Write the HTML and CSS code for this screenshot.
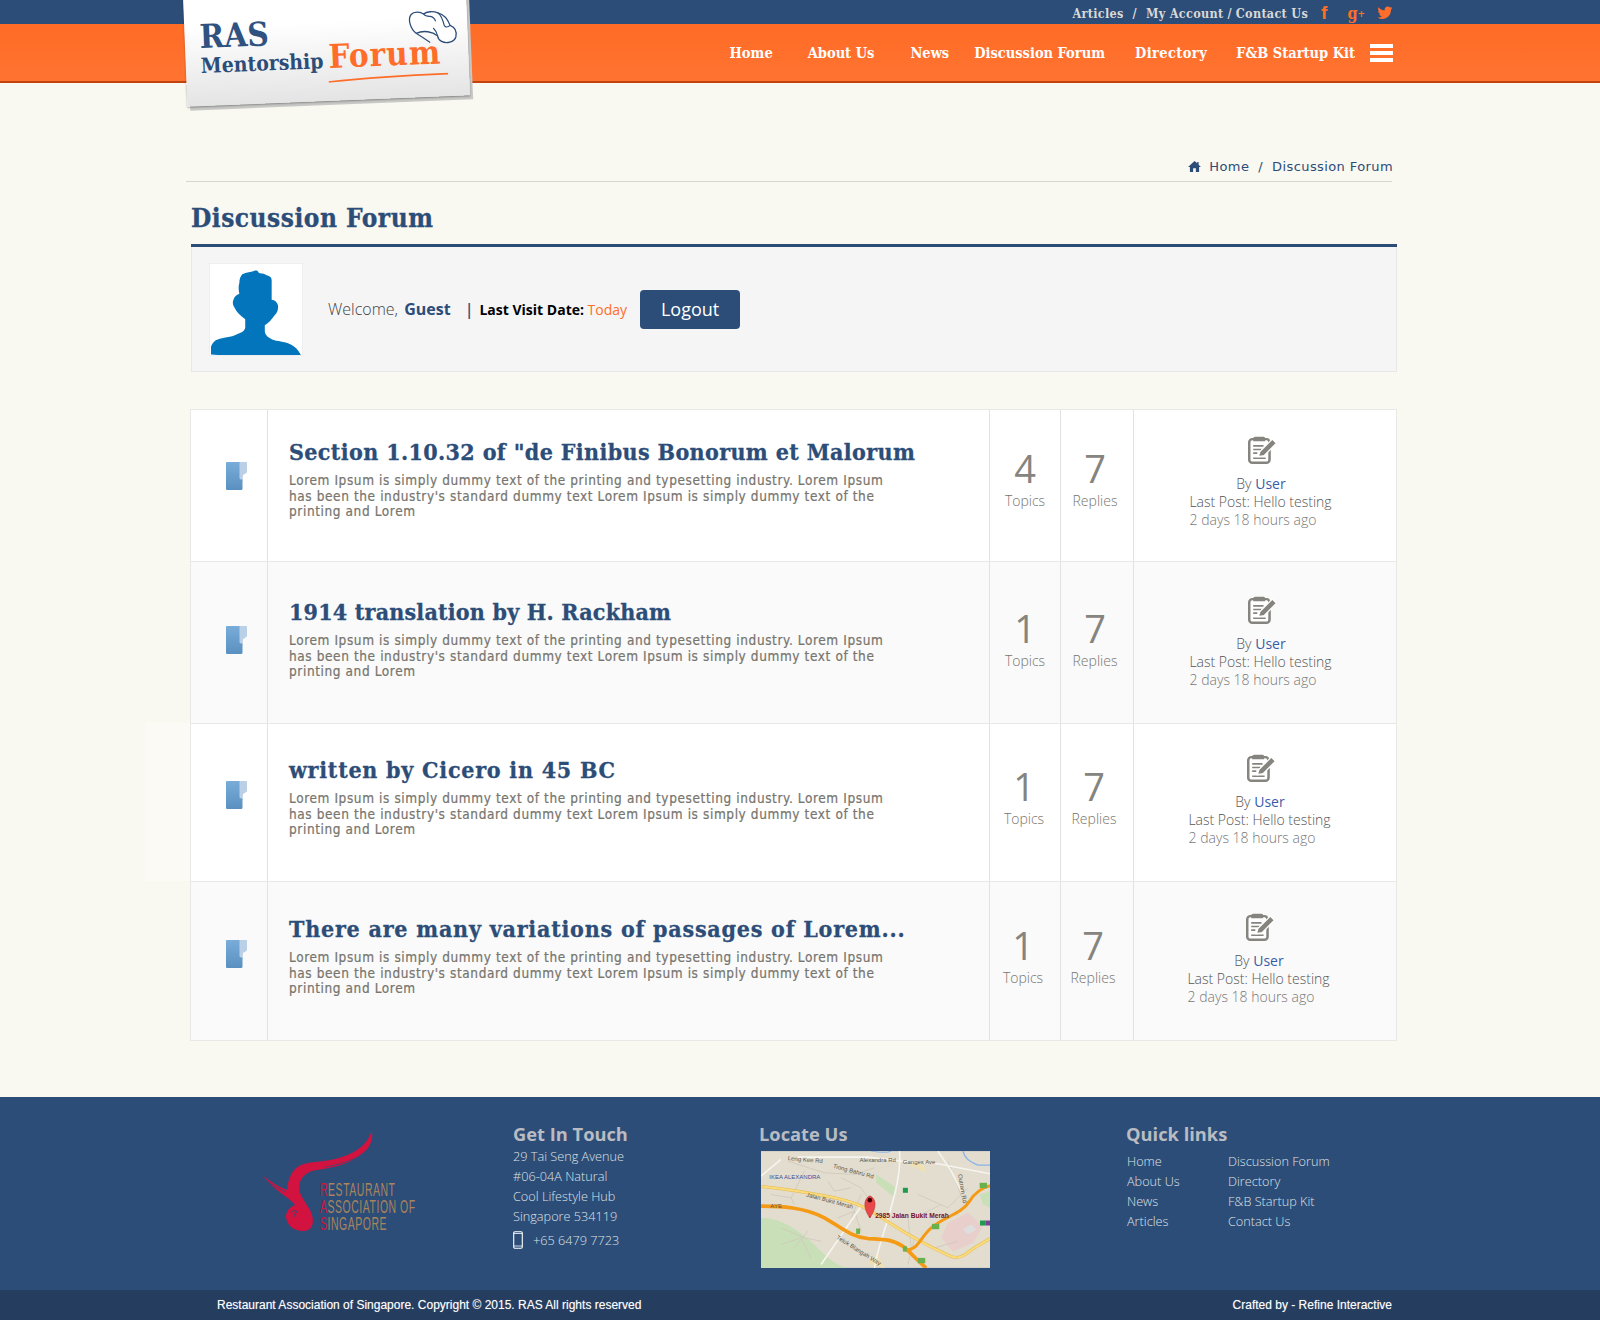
FILE: index.html
```html
<!DOCTYPE html>
<html lang="en">
<head>
    <meta charset="UTF-8">
    <meta name="viewport" content="width=device-width, initial-scale=1.0">
    <title>Discussion Forum</title>
    <link rel="stylesheet" href="styles.css">
</head>
<body>
    <header class="site-header">
        <div class="top-bar">
            <a href="#">Articles</a><span class="sep">/</span><a href="#">My Account</a><span class="sep-tight">/</span><a href="#">Contact Us</a>
            <span class="social social-f">f</span>
            <span class="social social-g">g<small>+</small></span>
            <svg class="social-tw" viewBox="0 0 24 24"><path d="M23 4.500c-.8.4-1.700.6-2.600.7.900-.6 1.700-1.500 2-2.500-.9.5-1.900.9-2.900 1.100a4.600 4.600 0 0 0-7.900 4.200C7.800 7.800 4.400 6 2.200 3.200 1 5.300 1.600 8 3.600 9.400c-.7 0-1.400-.2-2-.6 0 2.200 1.600 4.100 3.700 4.600-.7.200-1.400.2-2.100.1.600 1.900 2.300 3.200 4.300 3.200A9.300 9.300 0 0 1 .8 18.600 13 13 0 0 0 20.900 7c.9-.6 1.600-1.500 2.100-2.500z"/></svg>
        </div>
        <nav class="main-nav">
            <a class="nav-home" href="#">Home</a>
            <a class="nav-about" href="#">About Us</a>
            <a class="nav-news" href="#">News</a>
            <a class="nav-forum" href="#">Discussion Forum</a>
            <a class="nav-dir" href="#">Directory</a>
            <a class="nav-kit" href="#">F&amp;B Startup Kit</a>
            <span class="burger"><i></i><i></i><i></i></span>
        </nav>
        <div class="logo-back"></div>
        <div class="logo">
            <span class="logo-ras">RAS</span>
            <span class="logo-mentor">Mentorship</span>
            <span class="logo-forum">Forum</span>
            <svg class="logo-line" viewBox="0 0 120 6"><path d="M0 5C30 3 80 1.500 120 1.500" fill="none" stroke="#ff6d2a" stroke-width="1.600"/></svg>
            <svg class="logo-hat" viewBox="712 30 150 110"><path d="M735 100C718 85 710 55 722 42c8-9 28-8 38 0 10-8 30-8 44-2 20 6 30 22 36 40 14 6 20 20 16 36-6 16-30 20-44 12-8-4-11-10-12-18-15-12-40-20-65-10z" fill="#fff" stroke="#2c4d78" stroke-width="4"/><path d="M735 100c12 8 26 18 42 30M800 110c-2-10-6-18-12-24M760 42c4 6 12 8 20 8 10 2 14 8 16 16M804 40c10 8 14 20 18 40 4 6 10 6 18 0" fill="none" stroke="#2c4d78" stroke-width="3.500"/></svg>
        </div>
    </header>

    <div class="glow-patch"></div>

    <main class="wrap">
        <div class="breadcrumb">
            <svg class="home-icon" viewBox="0 0 14 12"><path d="M7 0L0 6.500h2V12h3.500V8h3v4H12V6.500h2L11.500 4V1H10v1.500z"/></svg>
            <a href="#">Home</a><span class="crumb-sep">/</span><a href="#">Discussion Forum</a>
        </div>

        <div class="content">
            <h1 class="page-title">Discussion Forum</h1>

            <section class="welcome">
                <div class="avatar">
                    <svg viewBox="0 0 94 92"><path d="M1 92V84C3 79 6 77 10 76c6-2 12-2 16-4 6-2 10-4 10-8v-8C31 52 27 49 25 44c-2-3-2-6-1-8 1-3 3-5 6-6-1-4-1-8 0-11 0-4 1-7 3-9 4-2 9-2 14-4 3 1 2 3 4 3 3 0 5 1 7 2 4 1 5 3 5 5l0 20c3 0 6 3 6.500 6 .5 4-1 8-3.500 10-3 4-6 8-10 10v6c0 4 4 8 11.700 10 7 1 11 2 15.300 4 4 2 7 5 9.600 10v6z" fill="#0275bd"/></svg>
                </div>
                <p class="welcome-text">Welcome, <b class="guest">Guest</b></p>
                <span class="welcome-sep">|</span>
                <p class="visit"><b>Last Visit Date:</b> <span class="today">Today</span></p>
                <button class="logout" type="button">Logout</button>
            </section>

            <section class="forum-list">
                <article class="forum-row row-a">
                    <div class="cell-folder"><svg class="folder" viewBox="0 0 21 28"><use href="#folder-shape"/></svg></div>
                    <div class="cell-main">
                        <h2>Section 1.10.32 of "de Finibus Bonorum et Malorum</h2>
                        <p>Lorem Ipsum is simply dummy text of the printing and typesetting industry. Lorem Ipsum has been the industry's standard dummy text Lorem Ipsum is simply dummy text of the printing and Lorem</p>
                    </div>
                    <div class="cell-count"><strong>4</strong><span>Topics</span></div>
                    <div class="cell-count count-replies"><strong>7</strong><span>Replies</span></div>
                    <div class="cell-last">
                        <svg class="note" viewBox="0 0 28 27"><use href="#note-shape"/></svg>
                        <div>By <a href="#">User</a></div>
                        <div class="last-line">Last Post: Hello testing</div>
                        <div class="ago">2 days 18 hours ago</div>
                    </div>
                </article>

                <article class="forum-row row-alt row-b">
                    <div class="cell-folder"><svg class="folder" viewBox="0 0 21 28"><use href="#folder-shape"/></svg></div>
                    <div class="cell-main">
                        <h2>1914 translation by H. Rackham</h2>
                        <p>Lorem Ipsum is simply dummy text of the printing and typesetting industry. Lorem Ipsum has been the industry's standard dummy text Lorem Ipsum is simply dummy text of the printing and Lorem</p>
                    </div>
                    <div class="cell-count"><strong>1</strong><span>Topics</span></div>
                    <div class="cell-count count-replies"><strong>7</strong><span>Replies</span></div>
                    <div class="cell-last">
                        <svg class="note" viewBox="0 0 28 27"><use href="#note-shape"/></svg>
                        <div>By <a href="#">User</a></div>
                        <div class="last-line">Last Post: Hello testing</div>
                        <div class="ago">2 days 18 hours ago</div>
                    </div>
                </article>

                <article class="forum-row row-c">
                    <div class="cell-folder"><svg class="folder" viewBox="0 0 21 28"><use href="#folder-shape"/></svg></div>
                    <div class="cell-main">
                        <h2>written by Cicero in 45 BC</h2>
                        <p>Lorem Ipsum is simply dummy text of the printing and typesetting industry. Lorem Ipsum has been the industry's standard dummy text Lorem Ipsum is simply dummy text of the printing and Lorem</p>
                    </div>
                    <div class="cell-count"><strong>1</strong><span>Topics</span></div>
                    <div class="cell-count count-replies"><strong>7</strong><span>Replies</span></div>
                    <div class="cell-last">
                        <svg class="note" viewBox="0 0 28 27"><use href="#note-shape"/></svg>
                        <div>By <a href="#">User</a></div>
                        <div class="last-line">Last Post: Hello testing</div>
                        <div class="ago">2 days 18 hours ago</div>
                    </div>
                </article>

                <article class="forum-row row-alt row-d">
                    <div class="cell-folder"><svg class="folder" viewBox="0 0 21 28"><use href="#folder-shape"/></svg></div>
                    <div class="cell-main">
                        <h2>There are many variations of passages of Lorem...</h2>
                        <p>Lorem Ipsum is simply dummy text of the printing and typesetting industry. Lorem Ipsum has been the industry's standard dummy text Lorem Ipsum is simply dummy text of the printing and Lorem</p>
                    </div>
                    <div class="cell-count"><strong>1</strong><span>Topics</span></div>
                    <div class="cell-count count-replies"><strong>7</strong><span>Replies</span></div>
                    <div class="cell-last">
                        <svg class="note" viewBox="0 0 28 27"><use href="#note-shape"/></svg>
                        <div>By <a href="#">User</a></div>
                        <div class="last-line">Last Post: Hello testing</div>
                        <div class="ago">2 days 18 hours ago</div>
                    </div>
                </article>
            </section>
        </div>
    </main>

    <footer class="site-footer">
        <div class="footer-main">
            <div class="footer-logo">
                <svg viewBox="0 0 160 110">
                    <path d="M108.700 3.700C111 12 106 22 100 26 90 35 76 40 54 43 44 44 37 50 36 60 36 70 46 78 49 88 51 95 50 103 42 104 32 105 24 99 23 90 23 84 27 80 32 78 26 70 12 64 0 49 8 55 16 60 24 63 25 52 29 42 38 38 48 34 60 35 72 32 88 28 104 20 108.700 3.700z" fill="#d2123f"/>
                    <path d="M28 86c2-3 5-3 6-1-2 1-3 3-3 5" fill="none" stroke="#2c4d78" stroke-width="1"/>
                    <path d="M3 53c6 5 13 9 20 12M103 24C94 32 80 37 62 40" fill="none" stroke="#2c4d78" stroke-width=".7"/>
                    <text class="ras-text" transform="translate(57 68.500) scale(.55 1)"><tspan class="ras-red">R</tspan>ESTAURANT</text>
                    <text class="ras-text" transform="translate(57 85.500) scale(.55 1)"><tspan class="ras-red">A</tspan>SSOCIATION OF</text>
                    <text class="ras-text" transform="translate(57 102.500) scale(.55 1)"><tspan class="ras-red">S</tspan>INGAPORE</text>
                </svg>
            </div>

            <div class="footer-contact">
                <h3>Get In Touch</h3>
                <p>29 Tai Seng Avenue</p>
                <p>#06-04A Natural</p>
                <p>Cool Lifestyle Hub</p>
                <p>Singapore 534119</p>
                <p class="phone">
                    <svg viewBox="0 0 10 18"><rect x=".7" y=".7" width="8.600" height="16.600" rx="1.200" fill="none" stroke="#fff" stroke-width="1.100"/><path d="M1 2.500h8M1 15h8" stroke="#fff" stroke-width=".8"/></svg>
                    +65 6479 7723
                </p>
            </div>

            <div class="footer-map">
                <h3>Locate Us</h3>
                <svg class="map" viewBox="0 0 686 350">
                    <rect width="686" height="350" fill="#e3ddd0"/>
                    <path d="M0 200C60 200 120 240 170 290 200 320 220 340 260 350H0z" fill="#c8dfb8"/>
                    <path d="M345 70l60 40-10 25-50-40zM655 130l31-10v50l-20-10z" fill="#c8dfb8"/>
                    <path d="M560 215l60-30 45 40-30 50-60 25-35-40z" fill="#e8cfcb"/>
                    <path d="M605 235l25-15 15 15-25 15z" fill="#dedede"/>
                    <path d="M440 40l45-10 10 35z" fill="#ece0b4"/>
                    <path d="M320 340l30-35 20 45z" fill="#ece0b4"/>
                    <g fill="none" stroke="#cfc9ba" stroke-width="2.500">
                        <path d="M80 30l110 35 90 5 60-20M130 60l-40 80M240 80l60 30 40 60M60 230l70 30 50 10M470 130l90 40 60-60M300 130l-30 70M560 30l50 130M520 290l70-20M100 290l40-50M440 200l10 90M230 200l50-20 20 60M460 260l-20 80M60 280l60-20 30 60M30 130l60 10 10 20M200 90l20 30 50-10M480 190l60-30"/>
                    </g>
                    <g fill="none" stroke="#f6f4ef">
                        <path d="M0 75L60 25M110 18l210 0 100 12 110 8 156 30M415 0c5 60-10 120-40 220-15 50-30 90-35 130M300 165L180 340M530 0l40 60 30 60" stroke-width="5"/>
                    </g>
                    <path d="M605 0c5 20 15 30 45 42h36" fill="none" stroke="#8ab4e8" stroke-width="4"/>
                    <path d="M330 0c30 5 50 5 60 0" fill="none" stroke="#8ab4e8" stroke-width="3"/>
                    <path d="M0 106C60 112 130 122 220 140 290 155 320 172 380 212 430 245 500 285 570 316 590 322 605 318 625 300 640 288 665 275 686 262" fill="none" stroke="#e6b84c" stroke-width="9"/>
                    <path d="M0 106C60 112 130 122 220 140 290 155 320 172 380 212 430 245 500 285 570 316 590 322 605 318 625 300 640 288 665 275 686 262" fill="none" stroke="#fbdc7a" stroke-width="6"/>
                    <path d="M0 165C60 165 130 168 190 200 240 228 270 258 320 262 370 264 395 265 425 285 445 300 470 330 495 350" fill="none" stroke="#f59a14" stroke-width="11"/>
                    <path d="M430 296C470 300 475 260 510 230 550 195 600 190 625 150 640 125 665 108 686 104" fill="none" stroke="#f59a14" stroke-width="9"/>
                    <g fill="#6ab04c"><rect x="425" y="110" width="15" height="15" fill="#1f9a4e"/><rect x="655" y="95" width="22" height="16"/><rect x="285" y="232" width="12" height="16"/><rect x="512" y="218" width="22" height="16"/><rect x="425" y="285" width="12" height="16"/><rect x="470" y="320" width="22" height="16"/></g>
                    <rect x="656" y="208" width="16" height="15" fill="#1f9a4e"/><rect x="672" y="208" width="14" height="15" fill="#7b3f98"/>
                    <path d="M326 200c-22-30-18-58 0-66 20 8 22 36 0 66z" fill="#e8484a" stroke="#b32a2a" stroke-width="1.500"/>
                    <circle cx="326" cy="147" r="7" fill="#400"/>
                    <circle cx="326" cy="197" r="3" fill="#d22"/>
                    <text class="map-pin" x="342" y="201">2985 Jalan Bukit Merah</text>
                    <text class="map-label" x="295" y="32">Alexandra Rd</text>
                    <text class="map-label" x="425" y="38">Ganges Ave</text>
                    <text class="map-label" x="80" y="27" transform="rotate(5 80 27)">Leng Kee Rd</text>
                    <text class="map-label" x="215" y="50" transform="rotate(15 215 50)">Tiong Bahru Rd</text>
                    <text class="map-label map-ikea" x="25" y="84">IKEA ALEXANDRA</text>
                    <text class="map-label" x="135" y="136" transform="rotate(15 135 136)">Jalan Bukit Merah</text>
                    <text class="map-label" x="28" y="172">AYE</text>
                    <text class="map-label" x="590" y="70" transform="rotate(80 590 70)">Outram Rd</text>
                    <text class="map-label" x="225" y="262" transform="rotate(32 225 262)">Telok Blangah Way</text>
                </svg>
            </div>

            <div class="footer-links">
                <h3>Quick links</h3>
                <ul>
                    <li><a href="#">Home</a></li>
                    <li><a href="#">Discussion Forum</a></li>
                    <li><a href="#">About Us</a></li>
                    <li><a href="#">Directory</a></li>
                    <li><a href="#">News</a></li>
                    <li><a href="#">F&amp;B Startup Kit</a></li>
                    <li><a href="#">Articles</a></li>
                    <li><a href="#">Contact Us</a></li>
                </ul>
            </div>
        </div>
        <div class="footer-bottom">
            <span>Restaurant Association of Singapore. Copyright © 2015. RAS All rights reserved</span>
            <span>Crafted by - Refine Interactive</span>
        </div>
    </footer>

    <!-- shared icons -->
    <svg class="icon-defs" width="0" height="0">
        <defs>
            <linearGradient id="folder-grad" x1="0" y1="0" x2="0" y2="1">
                <stop offset="0" stop-color="#79acd9"/>
                <stop offset="1" stop-color="#5a90c0"/>
            </linearGradient>
            <g id="folder-shape">
                <path d="M13 0h7c.6 0 1 .5 1 1v9c0 .5-.5 1-1.500 1.500L17 13l-.5 6H13z" fill="#b9d0e6"/>
                <path d="M1 0h12.500v16c0 1 1 1.500 3 1.500V26.500c0 1-.8 1.500-1.500 1.500H1c-.6 0-1-.6-1-1.500V1c0-.5.5-1 1-1z" fill="url(#folder-grad)"/>
            </g>
            <g id="note-shape">
                <rect x="1.200" y="3" width="19.600" height="22.800" rx="3" fill="#fff" stroke="#85847e" stroke-width="2.400"/>
                <path d="M5 5V2.500C5 1.500 6 .8 7 .8h8c1 0 1.500.7 1.500 1.700V5z" fill="#85847e"/>
                <path d="M5 9.500h10M5 13h8M5 16.500h4M5 21.500h12" stroke="#85847e" stroke-width="1.600"/>
                <path d="M10 20l1.500-5L23.500 3l4 4L15.500 19z" fill="#85847e" stroke="#fff" stroke-width="1.200"/>
            </g>
        </defs>
    </svg>
</body>
</html>
```

FILE: styles.css
```css
/* General */
body {
    margin: 0;
    background: #f9f8f1;
    font-family: "Open Sans", Arial, sans-serif;
    color: #77756e;
    overflow-x: hidden;
}
a {
    text-decoration: none;
    color: inherit;
}
h1, h2, h3, p {
    margin: 0;
}
.icon-defs {
    position: absolute;
}

/* Header */
.site-header {
    position: relative;
    font-family: "DejaVu Serif", serif;
    font-stretch: condensed;
    font-weight: 700;
}
.top-bar {
    height: 24px;
    box-sizing: border-box;
    padding: 2px 207px 0 0;
    background: #2c4d78;
    color: #d9d9d6;
    font-size: 12.5px;
    letter-spacing: 0.3px;
    display: flex;
    justify-content: flex-end;
    align-items: center;
}
.sep {
    margin: 0 9px;
}
.sep-tight {
    margin: 0 4px;
}
.social {
    color: #ff6d2a;
    letter-spacing: 0;
}
.social-f {
    margin-left: 13px;
    font-family: "Liberation Sans", sans-serif;
    font-size: 19px;
}
.social-g {
    margin-left: 20px;
    font-size: 16px;
    font-weight: 700;
}
.social-g small {
    font-size: 10px;
    vertical-align: 2px;
}
.social-tw {
    width: 16px;
    height: 16px;
    fill: #ff6d2a;
    margin-left: 12px;
}
.main-nav {
    height: 59px;
    box-sizing: border-box;
    background: linear-gradient(#ff6c26, #ff7331);
    border-bottom: 2px solid #c1440e;
    color: #fff;
    font-size: 14.5px;
    display: flex;
    justify-content: flex-end;
    align-items: center;
    padding-right: 207px;
}
.nav-about {
    margin-left: 35px;
}
.nav-news {
    margin-left: 36px;
}
.nav-forum {
    margin-left: 25px;
}
.nav-dir {
    margin-left: 30px;
    letter-spacing: 0.4px;
}
.nav-kit {
    margin-left: 29px;
}
.burger {
    margin-left: 15px;
    width: 23px;
    display: flex;
    flex-direction: column;
    gap: 3px;
}
.burger i {
    height: 4px;
    background: #fff;
}

/* Logo sits over both header bars */
.logo,
.logo-back {
    position: absolute;
    left: 185px;
    top: -12px;
    width: 283px;
    height: 113px;
    transform: rotate(-2.3deg);
}
.logo-back {
    background: #c9c9c7;
    left: 188px;
    top: -8px;
}
.logo {
    background: linear-gradient(#fff 30%, #e4e4e4);
    box-shadow: 0 1px 2px rgba(0, 0, 0, 0.35);
}
.logo-ras,
.logo-mentor,
.logo-forum {
    position: absolute;
    white-space: nowrap;
}
.logo-ras {
    left: 15px;
    top: 24px;
    font-size: 33px;
    color: #2f5280;
}
.logo-mentor {
    left: 15px;
    top: 60px;
    font-size: 21px;
    color: #2c4d78;
}
.logo-forum {
    left: 143px;
    top: 49px;
    font-size: 33px;
    color: #ff6d2a;
    letter-spacing: 1px;
}
.logo-line {
    position: absolute;
    left: 142px;
    top: 89px;
    width: 120px;
    height: 6px;
}
.logo-hat {
    position: absolute;
    left: 224px;
    top: 26px;
    width: 49px;
    height: 36px;
}

/* Faint lighter area left of row three */
.glow-patch {
    position: absolute;
    left: 145px;
    top: 723px;
    width: 46px;
    height: 158px;
    background: #fbfaf5;
}

/* Breadcrumb */
.wrap {
    position: relative;
    width: 1206px;
    margin-left: 186px;
}
.breadcrumb {
    height: 99px;
    box-sizing: border-box;
    padding-top: 69px;
    border-bottom: 1px solid #d5d4ce;
    display: flex;
    justify-content: flex-end;
    align-items: center;
    font-family: "DejaVu Sans", sans-serif;
    font-size: 13px;
    letter-spacing: 0.4px;
    color: #2c4d78;
}
.breadcrumb a:last-child {
    margin-right: -1px;
}
.home-icon {
    width: 13px;
    height: 11px;
    fill: #2c4d78;
    margin-right: 8px;
}
.crumb-sep {
    margin: 0 9px;
}

/* Page title */
.content {
    padding-left: 5px;
    width: 1206px;
}
.page-title {
    margin-top: 18px;
    padding: 0 0 8px 0;
    font-family: "DejaVu Serif", serif;
    font-stretch: condensed;
    font-size: 26px;
    letter-spacing: 0.5px;
    line-height: 36px;
    color: #2c4d78;
    border-bottom: 3px solid #2c4d78;
    -webkit-text-stroke: 0.3px #2c4d78;
}

/* Welcome box */
.welcome {
    height: 125px;
    box-sizing: border-box;
    background: #f5f5f6;
    border: 1px solid #e8e8e6;
    border-top: 0;
    display: flex;
    align-items: center;
    padding-left: 17px;
}
.avatar {
    width: 94px;
    height: 93px;
    background: #fff;
    border: 1px solid #eee;
    box-sizing: border-box;
    margin-right: 25px;
}
.avatar svg {
    display: block;
    width: 100%;
    height: 100%;
}
.welcome-text {
    font-size: 16px;
    font-weight: 300;
    color: #444;
}
.guest {
    font-weight: 700;
    color: #2c4d78;
    margin-left: 2px;
}
.welcome-sep {
    margin: 0 6px 0 14px;
    color: #2c4d78;
    font-size: 16px;
    font-weight: 600;
}
.visit {
    font-size: 14px;
    color: #000;
}
.visit b {
    font-weight: 700;
}
.today {
    color: #ff6d2a;
    font-weight: 400;
}
.logout {
    margin-left: 13px;
    width: 100px;
    height: 39px;
    background: #2c4d78;
    color: #fff;
    border: 0;
    border-radius: 4px;
    font-family: "Open Sans", Arial, sans-serif;
    font-size: 18px;
}

/* Forum rows */
.forum-list {
    margin: 37px 0 0 -1px;
    border: 1px solid #e8e8e6;
    background: #fff;
}
.forum-row {
    display: grid;
    grid-template-columns: 76px 722px 71px 73px 1fr;
    box-sizing: border-box;
    border-bottom: 1px solid #e8e8e6;
}
.forum-row:last-child {
    border-bottom: 0;
}
.row-alt {
    background: #fafafa;
}
.row-a { height: 152px; --pad: 24px; --track: 0.37px; --nudge: 0px; --fold: 28px; }
.row-b { height: 162px; --pad: 32px; --track: 0.2px; --nudge: 0px; --fold: 32px; }
.row-c { height: 158px; --pad: 28px; --track: 0.75px; --nudge: 2px; --fold: 29px; }
.row-d { height: 158px; --pad: 29px; --track: 0.77px; --nudge: 4px; --fold: 29px; }
.forum-row > div {
    border-left: 1px solid #e2e2e0;
    padding-top: var(--pad);
}
.forum-row > div:first-child {
    border-left: 0;
}
.cell-folder {
    display: flex;
    justify-content: center;
    padding-left: 15px;
}
.folder {
    width: 21px;
    height: 28px;
    margin-top: var(--fold);
}
.cell-main {
    padding-left: 21px;
}
.cell-main h2 {
    margin-top: 1px;
    font-family: "DejaVu Serif", serif;
    font-stretch: condensed;
    font-size: 23px;
    letter-spacing: var(--track);
    line-height: 34px;
    color: #2c4d78;
    white-space: nowrap;
    -webkit-text-stroke: 0.3px #2c4d78;
}
.cell-main p {
    margin-top: 4px;
    width: 610px;
    font-family: "DejaVu Sans", sans-serif;
    font-stretch: condensed;
    font-size: 13.5px;
    letter-spacing: 0.6px;
    line-height: 15.5px;
    color: #77756e;
    -webkit-text-stroke: 0.2px #77756e;
}
.cell-count {
    text-align: center;
    padding-right: var(--nudge);
}
.count-replies {
    padding-right: calc(var(--nudge) + 4px);
}
.cell-count strong {
    display: block;
    font-weight: 500;
    font-size: 38px;
    line-height: 44px;
    margin-top: 12px;
    color: #85847e;
}
.cell-count span {
    display: block;
    margin-top: 1px;
    font-size: 14px;
    line-height: 20px;
    font-weight: 300;
    color: #77756e;
}
.cell-last {
    text-align: center;
    font-size: 14px;
    font-weight: 300;
    line-height: 18px;
    color: #555;
    padding-right: calc(var(--nudge) + 8px);
}
.cell-last a {
    color: #3a5ca8;
    font-weight: 400;
}
.note {
    display: block;
    width: 29px;
    height: 28px;
    margin: 2px auto 11px;
    transform: translateX(1px);
}
.last-line {
    margin-left: -1px;
}
.ago {
    color: #777;
    margin-right: 16px;
}

/* Footer */
.site-footer {
    margin-top: 56px;
    background: #2c4d78;
    color: #dfe1e5;
}
.footer-main {
    height: 193px;
    display: flex;
    box-sizing: border-box;
    padding-top: 25px;
}
.site-footer h3 {
    font-size: 18.3px;
    line-height: 24px;
    font-weight: 700;
    color: #b9bcc2;
}
.footer-logo {
    width: 513px;
    box-sizing: border-box;
    padding: 5px 0 0 263px;
}
.footer-logo svg {
    display: block;
    width: 160px;
    height: 110px;
}
.ras-text {
    font-family: "Liberation Sans", sans-serif;
    font-size: 19px;
    letter-spacing: 1px;
    fill: #a9845c;
}
.ras-red {
    fill: #d2123f;
}
.footer-contact {
    width: 246px;
    font-size: 12.7px;
    font-weight: 300;
    line-height: 20px;
}
.phone {
    display: flex;
    align-items: center;
    gap: 10px;
    margin-top: 4px;
}
.phone svg {
    width: 10px;
    height: 18px;
}
.footer-map {
    width: 367px;
}
.map {
    display: block;
    width: 229px;
    height: 117px;
    margin: 5px 0 0 2px;
}
.map-pin {
    font-family: "Liberation Sans", sans-serif;
    font-size: 20px;
    font-weight: 700;
    fill: #7a0f22;
}
.map-label {
    font-family: "Liberation Sans", sans-serif;
    font-size: 18px;
    fill: #5c5848;
}
.map-ikea {
    fill: #3c4f9c;
}
.footer-links ul {
    margin: 5px 0 0 1px;
    padding: 0;
    list-style: none;
    display: grid;
    grid-template-columns: 101px 140px;
    grid-auto-rows: 20px;
    font-size: 12.7px;
    font-weight: 300;
    line-height: 20px;
}
.footer-bottom {
    height: 30px;
    background: #253d5f;
    display: flex;
    justify-content: space-between;
    align-items: center;
    box-sizing: border-box;
    padding: 0 208px 0 217px;
    font-family: "Liberation Sans", Arial, sans-serif;
    font-size: 12px;
    color: #fff;
    text-shadow: 0 0 1px rgba(255, 255, 255, 0.4);
}
```
